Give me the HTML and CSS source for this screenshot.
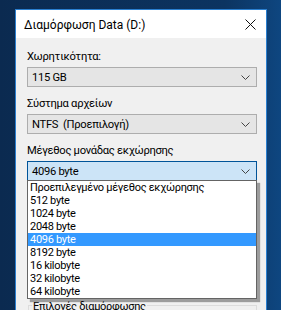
FILE: index.html
```html
<!doctype html>
<html lang="el">
<head>
  <meta charset="utf-8">
  <title>Διαμόρφωση Data (D:)</title>
  <link rel="stylesheet" href="styles.css">
</head>
<body>
  <div class="dialog">
    <div class="titlebar">
      <span class="title">Διαμόρφωση Data (D:)</span>
      <svg class="close" width="11" height="11" viewBox="0 0 11 11">
        <path d="M0.5 0.5 L10.5 10.5 M10.5 0.5 L0.5 10.5" stroke="#111" stroke-width="1" fill="none"/>
      </svg>
    </div>

    <div class="content">
      <div class="label">Χωρητικότητα:</div>
      <div class="combo">
        <span>115 GB</span>
        <svg class="chev" width="9" height="5" viewBox="0 0 9 5"><path d="M0.5 0.5 L4.5 4.5 L8.5 0.5" stroke="#444" fill="none"/></svg>
      </div>

      <div class="label">Σύστημα αρχείων</div>
      <div class="combo">
        <span>NTFS&nbsp; (Προεπιλογή)</span>
        <svg class="chev" width="9" height="5" viewBox="0 0 9 5"><path d="M0.5 0.5 L4.5 4.5 L8.5 0.5" stroke="#444" fill="none"/></svg>
      </div>

      <div class="label">Μέγεθος μονάδας εκχώρησης</div>
      <div class="combo-wrap">
        <div class="combo focused">
          <span>4096 byte</span>
          <svg class="chev" width="9" height="5" viewBox="0 0 9 5"><path d="M0.5 0.5 L4.5 4.5 L8.5 0.5" stroke="#444" fill="none"/></svg>
        </div>
        <ul class="droplist">
          <li>Προεπιλεγμένο μέγεθος εκχώρησης</li>
          <li>512 byte</li>
          <li>1024 byte</li>
          <li>2048 byte</li>
          <li class="selected">4096 byte</li>
          <li>8192 byte</li>
          <li>16 kilobyte</li>
          <li>32 kilobyte</li>
          <li>64 kilobyte</li>
        </ul>
      </div>

      <div class="group">
        <span class="group-title">Επιλογές διαμόρφωσης</span>
      </div>
    </div>
  </div>
</body>
</html>
```

FILE: styles.css
```css
html,
body {
  height: 100%;
  margin: 0;
}

body {
  background: linear-gradient(90deg, #0b2a50 0%, #0c3461 80%, #0e4680 100%);
  overflow: hidden;
  font-family: Roboto, "Liberation Sans", sans-serif;
  font-size: 11px;
  letter-spacing: -0.3px;
  color: #000;
}

.dialog {
  margin: 9px 0 0 15px;
  width: 250px;
  height: 320px;
  border: 1px solid #2a7fd0;
  background: #f0f0f0;
}

.titlebar {
  height: 28px;
  background: #fff;
  display: flex;
  align-items: center;
  justify-content: space-between;
  padding: 0 10px 0 8px;
}

.title {
  font-size: 12px;
  letter-spacing: 0;
  margin-top: 1px;
}

.close {
  display: block;
}

.content {
  padding: 11px 9px 0 11px;
}

.label {
  font-size: 11.2px;
  line-height: 15px;
  height: 15px;
  margin-bottom: 3px;
}

.combo {
  height: 18px;
  border: 1px solid #adadad;
  background: #e5e5e5;
  display: flex;
  align-items: center;
  justify-content: space-between;
  padding: 0 6px 0 4px;
  margin-bottom: 9px;
  font-size: 11.2px;
}

.combo.focused {
  background: #cce4f7;
  border-color: #005499;
  margin-bottom: 0;
}

.chev {
  display: block;
}

.combo-wrap {
  position: relative;
}

.droplist {
  position: absolute;
  top: 19px;
  left: 0;
  width: 228px;
  margin: 0;
  padding: 0;
  list-style: none;
  background: #fff;
  border: 1px solid #646464;
  box-shadow: 3px 3px 1px rgba(0, 0, 0, 0.35);
  z-index: 2;
}

.droplist li {
  height: 13px;
  line-height: 13px;
  padding-left: 2px;
  white-space: nowrap;
}

.droplist li.selected {
  background: #3399ff;
  color: #fff;
}

.group {
  margin: 124px 0 0 1px;
  height: 40px;
  border: 1px solid #dcdcdc;
}

.group-title {
  display: inline-block;
  margin: -7px 0 0 3px;
  padding: 0 1px;
  background: #f0f0f0;
  line-height: 15px;
  vertical-align: top;
}
```
